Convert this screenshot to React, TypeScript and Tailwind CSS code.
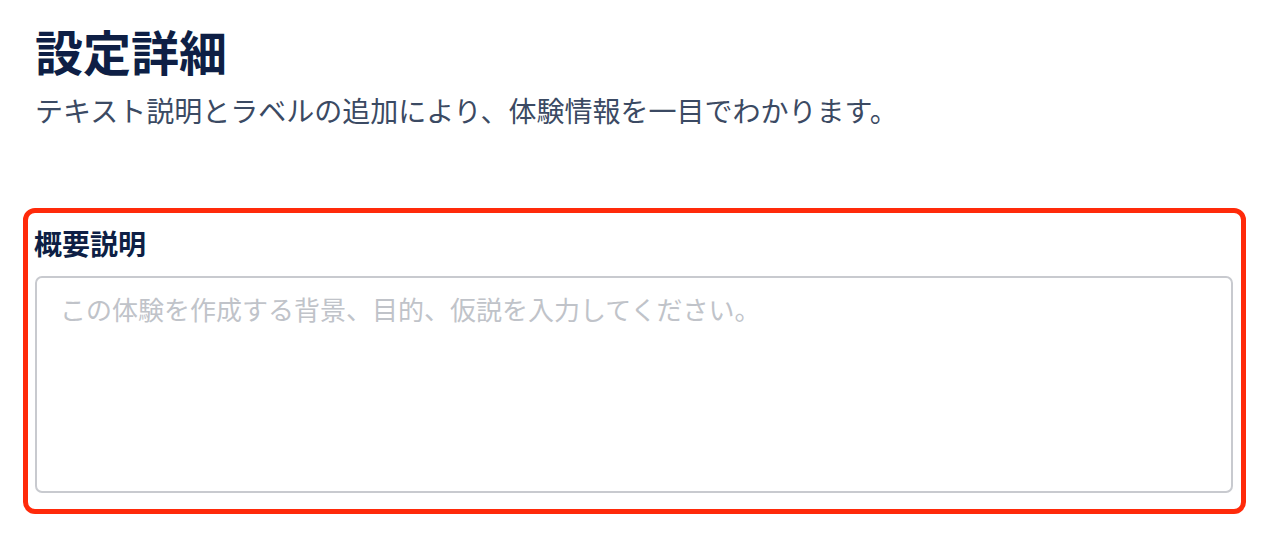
import React from "react";

export default function App() {
  return (
    <div
      className="min-h-[536px] w-[1288px] bg-white pl-[23px] pt-[26px]"
      style={{ fontFamily: '"Noto Sans CJK JP", "Noto Sans", sans-serif' }}
    >
      <div className="pl-[12px]">
        <h1 className="text-[48px] font-bold leading-none text-[#0e1f45]">設定詳細</h1>
        <p className="mt-[22px] text-[28px] leading-none text-[#3b4a63]">
          テキスト説明とラベルの追加により、体験情報を一目でわかります。
        </p>
      </div>
      <div className="mt-[84px] w-[1223px] rounded-[12px] border-[5px] border-[#ff2a0a] px-[7px] pb-[16px] pt-[16px]">
        <label className="-ml-[1px] block text-[28px] font-bold leading-none text-[#0e1f45]">
          概要説明
        </label>
        <textarea
          className="mt-[19px] block h-[217px] w-[1198px] resize-none rounded-[7px] border-2 border-[#c8cacf] bg-white px-[23px] pt-[11px] text-[26px] leading-[1.5] text-[#0e1f45] outline-none placeholder:text-[#c0c3c9]"
          placeholder="この体験を作成する背景、目的、仮説を入力してください。"
        />
      </div>
    </div>
  );
}
